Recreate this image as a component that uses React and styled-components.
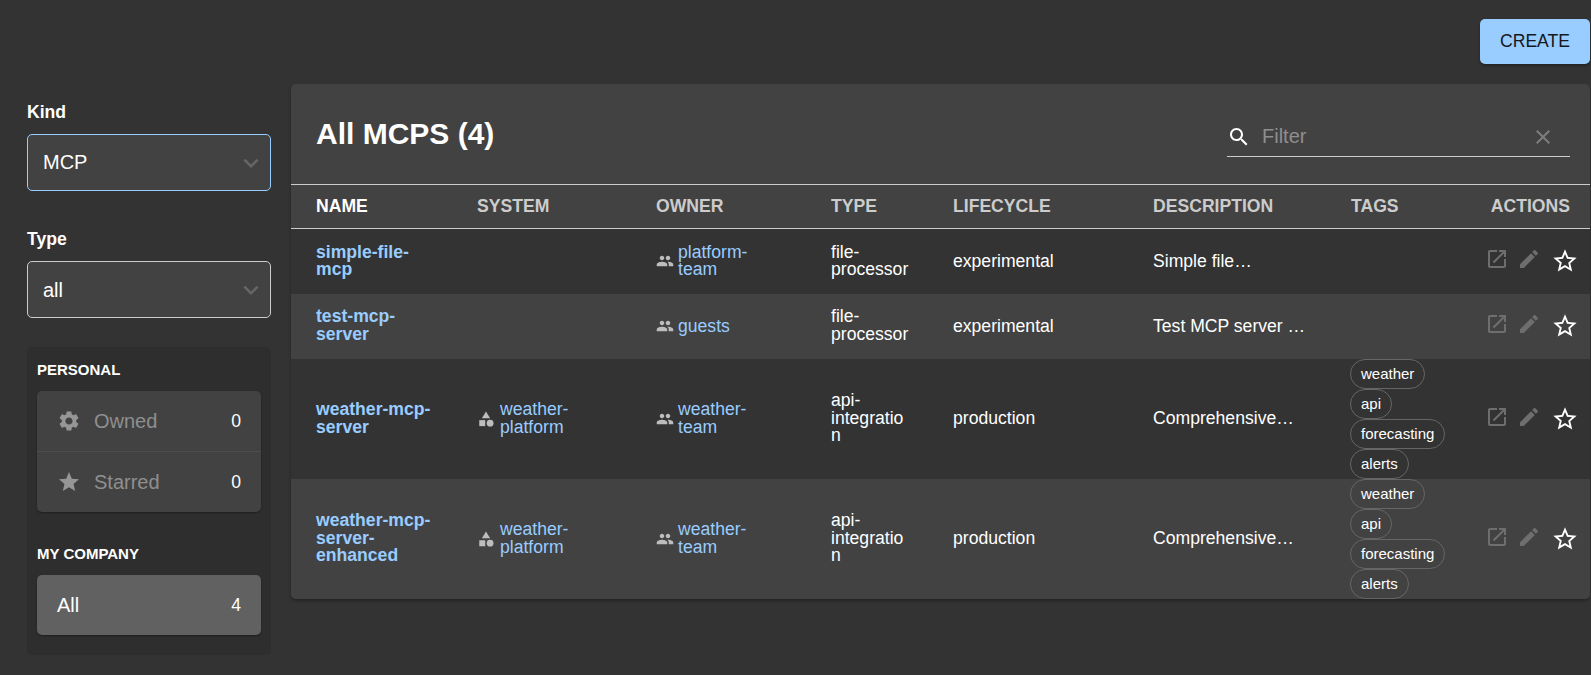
import React from "react";
import styled, { createGlobalStyle } from "styled-components";

const GlobalStyle = createGlobalStyle`
html, body {
  margin: 0;
  background: #333333;
  color: #ffffff;
  font-family: "Liberation Sans", Arial, sans-serif;
  overflow: hidden;
}
`;

const Page = styled.div`
  box-sizing: border-box;
  height: 675px;
  padding: 19px 1px 0 27px;
`;

const TopBar = styled.div`
  display: flex;
  justify-content: flex-end;
  margin-bottom: 20px;
`;

const CreateButton = styled.button`
  width: 110px;
  height: 45px;
  border: 0;
  border-radius: 5px;
  background: #99ccff;
  color: #14181f;
  font: 17.6px "Liberation Sans", Arial, sans-serif;
  box-shadow: 0 2px 3px rgba(0, 0, 0, 0.3);
`;

const Content = styled.div`
  display: grid;
  grid-template-columns: 244px 1fr;
  gap: 20px;
  align-items: start;
`;

const Sidebar = styled.aside`
  padding-top: 18px;
`;

const FieldLabel = styled.div`
  font-size: 17.6px;
  line-height: 20px;
  font-weight: 700;
  margin-bottom: 12px;
`;

const FieldGroup = styled.div`
  margin-bottom: ${(p) => p.$gap}px;
`;

const Select = styled.div`
  box-sizing: border-box;
  display: flex;
  align-items: center;
  justify-content: space-between;
  height: 57px;
  padding: 0 4px 0 15px;
  background: #424242;
  border: 1px solid ${(p) => (p.$focused ? "#99ccff" : "#cccccc")};
  border-radius: 5px;
  font-size: 20px;
`;

const SelectValue = styled.span`
  padding-top: ${(p) => (p.$lower ? "2px" : "0")};
`;

const FilterCard = styled.div`
  padding: 0 10px 20px;
  background: #2e2e2e;
  border-radius: 5px;
`;

const SectionTitle = styled.div`
  font-size: 15px;
  line-height: 15px;
  font-weight: 700;
  padding: ${(p) => (p.$first ? "15px 0 14px" : "34px 0 14px")};
`;

const MenuCard = styled.div`
  background: ${(p) => (p.$active ? "#616161" : "#424242")};
  border-radius: 5px;
  box-shadow: 0 1px 2px rgba(0, 0, 0, 0.35);
`;

const MenuRow = styled.div`
  display: flex;
  align-items: center;
  gap: 13px;
  height: 60px;
  padding: 0 20px;
  font-size: 20px;
  color: ${(p) => (p.$muted ? "#8f8f8f" : "#ffffff")};
  & + & {
    border-top: 1px solid #4d4d4d;
  }
`;

const MenuCount = styled.span`
  margin-left: auto;
  font-size: 17.6px;
  color: #ffffff;
`;

const Panel = styled.section`
  background: #424242;
  border-radius: 5px;
  box-shadow: 0 2px 3px rgba(0, 0, 0, 0.3);
  overflow: hidden;
`;

const PanelHeader = styled.div`
  display: flex;
  align-items: center;
  justify-content: space-between;
  height: 100px;
  padding: 0 20px 0 25px;
`;

const Title = styled.h2`
  margin: 0;
  font-size: 30px;
  font-weight: 700;
`;

const FilterField = styled.div`
  display: flex;
  align-items: center;
  box-sizing: border-box;
  width: 343px;
  height: 40px;
  margin-top: 6px;
  padding-right: 15px;
  border-bottom: 1px solid #cccccc;
`;

const FilterInput = styled.input`
  flex: 1;
  min-width: 0;
  margin-left: 11px;
  padding: 0;
  border: 0;
  outline: 0;
  background: transparent;
  color: #ffffff;
  font: 20px "Liberation Sans", Arial, sans-serif;
  &::placeholder {
    color: #8f8f8f;
    opacity: 1;
  }
`;

const Table = styled.table`
  width: 100%;
  table-layout: fixed;
  border-collapse: collapse;
`;

const HeadRow = styled.tr`
  height: 44px;
  border-top: 1px solid #cccccc;
  border-bottom: 1px solid #cccccc;
`;

const HeadCell = styled.th`
  padding: ${(p) => (p.$first ? "0 16px 0 25px" : p.$right ? "0 20px 0 0" : "0 16px")};
  text-align: ${(p) => (p.$right ? "right" : "left")};
  font-size: 17.6px;
  font-weight: 700;
  color: ${(p) => (p.$active ? "#ffffff" : "#cccccc")};
  text-transform: uppercase;
`;

const BodyRow = styled.tr`
  height: 65px;
  background: ${(p) => (p.$odd ? "#333333" : "#424242")};
`;

const Cell = styled.td`
  padding: ${(p) => (p.$first ? "0 10px 0 25px" : p.$flush ? "0" : "0 16px")};
  font-size: 17.6px;
  line-height: 17.6px;
  white-space: pre-line;
  vertical-align: middle;
`;

const NameLink = styled.a`
  color: #99ccff;
  font-weight: 700;
`;

const EntityLink = styled.div`
  display: flex;
  align-items: center;
  gap: ${(p) => p.$gap}px;
  color: #99ccff;
`;

// single line values in the short rows sit a pixel lower
const CellText = styled.span`
  display: block;
  padding-top: ${(p) => (p.$lower ? "1px" : "0")};
`;

const TagList = styled.div`
  display: flex;
  flex-direction: column;
  align-items: flex-start;
  margin-left: 15px;
`;

const Tag = styled.span`
  box-sizing: border-box;
  height: 30px;
  padding: 0 10px;
  border: 1px solid #666666;
  border-radius: 15px;
  font-size: 15px;
  line-height: 28px;
`;

const Actions = styled.div`
  display: flex;
  align-items: flex-start;
  justify-content: flex-end;
  gap: 8px;
  padding-right: 11px;
`;

const StarButton = styled.span`
  display: flex;
  margin-left: 2px;
`;

const Icon = ({ size = 24, color = "currentColor", children }) => (
  <svg width={size} height={size} viewBox="0 0 24 24" fill={color} style={{ flex: "none" }}>
    {children}
  </svg>
);

const Chevron = () => (
  <Icon size={30} color="#666666">
    <path d="M16.59 8.59L12 13.17 7.41 8.59 6 10l6 6 6-6z" />
  </Icon>
);

const GearIcon = () => (
  <Icon color="#969696">
    <path d="M19.14 12.94c.04-.3.06-.61.06-.94 0-.32-.02-.64-.07-.94l2.03-1.58c.18-.14.23-.41.12-.61l-1.92-3.32c-.12-.22-.37-.29-.59-.22l-2.39.96c-.5-.38-1.03-.7-1.62-.94l-.36-2.54c-.04-.24-.24-.41-.48-.41h-3.84c-.24 0-.43.17-.47.41l-.36 2.54c-.59.24-1.13.57-1.62.94l-2.39-.96c-.22-.08-.47 0-.59.22L2.74 8.87c-.12.21-.08.47.12.61l2.03 1.58c-.05.3-.09.63-.09.94s.02.64.07.94l-2.03 1.58c-.18.14-.23.41-.12.61l1.92 3.32c.12.22.37.29.59.22l2.39-.96c.5.38 1.03.7 1.62.94l.36 2.54c.05.24.24.41.48.41h3.84c.24 0 .44-.17.47-.41l.36-2.54c.59-.24 1.13-.56 1.62-.94l2.39.96c.22.08.47 0 .59-.22l1.92-3.32c.12-.22.07-.47-.12-.61l-2.01-1.58zM12 15.6c-1.98 0-3.6-1.62-3.6-3.6s1.62-3.6 3.6-3.6 3.6 1.62 3.6 3.6-1.62 3.6-3.6 3.6z" />
  </Icon>
);

const StarIcon = () => (
  <Icon color="#969696">
    <path d="M12 17.27L18.18 21l-1.64-7.03L22 9.24l-7.19-.61L12 2 9.19 8.63 2 9.24l5.46 4.73L5.82 21z" />
  </Icon>
);

const SearchIcon = () => (
  <Icon color="#ffffff">
    <path d="M15.5 14h-.79l-.28-.27C15.41 12.59 16 11.11 16 9.5 16 5.91 13.09 3 9.5 3S3 5.91 3 9.5 5.91 16 9.5 16c1.61 0 3.09-.59 4.23-1.57l.27.28v.79l5 4.99L20.49 19l-4.99-5zm-6 0C7.01 14 5 11.99 5 9.5S7.01 5 9.5 5 14 7.01 14 9.5 11.99 14 9.5 14z" />
  </Icon>
);

const ClearIcon = () => (
  <Icon color="#7d7d7d">
    <path d="M19 6.41L17.59 5 12 10.59 6.41 5 5 6.41 10.59 12 5 17.59 6.41 19 12 13.41 17.59 19 19 17.59 13.41 12z" />
  </Icon>
);

const PeopleIcon = () => (
  <Icon size={18} color="#bdbdbd">
    <path d="M16 11c1.66 0 2.99-1.34 2.99-3S17.66 5 16 5c-1.66 0-3 1.34-3 3s1.34 3 3 3zm-8 0c1.66 0 2.99-1.34 2.99-3S9.66 5 8 5C6.34 5 5 6.34 5 8s1.34 3 3 3zm0 2c-2.33 0-7 1.17-7 3.5V19h14v-2.5c0-2.33-4.67-3.5-7-3.5zm8 0c-.29 0-.62.02-.97.05 1.16.84 1.97 1.97 1.97 3.45V19h6v-2.5c0-2.33-4.67-3.5-7-3.5z" />
  </Icon>
);

const CategoryIcon = () => (
  <Icon size={18} color="#bdbdbd">
    <path d="M12 2l-5.5 9h11z" />
    <circle cx="17.5" cy="17.5" r="4.5" />
    <path d="M3 13.5h8v8H3z" />
  </Icon>
);

const OpenIcon = () => (
  <Icon color="#6e6e6e">
    <path d="M19 19H5V5h7V3H5c-1.11 0-2 .9-2 2v14c0 1.1.89 2 2 2h14c1.1 0 2-.9 2-2v-7h-2v7zM14 3v2h3.59l-9.83 9.83 1.41 1.41L19 6.41V10h2V3h-7z" />
  </Icon>
);

const EditIcon = () => (
  <Icon color="#6e6e6e">
    <path d="M3 17.25V21h3.75L17.81 9.94l-3.75-3.75L3 17.25zM20.71 7.04c.39-.39.39-1.02 0-1.41l-2.34-2.34a.9959.9959 0 0 0-1.41 0l-1.83 1.83 3.75 3.75 1.83-1.83z" />
  </Icon>
);

const StarBorderIcon = () => (
  <Icon size={28} color="#ffffff">
    <path d="M22 9.24l-7.19-.62L12 2 9.19 8.63 2 9.24l5.46 4.73L5.82 21 12 17.27 18.18 21l-1.63-7.03L22 9.24zM12 15.4l-3.76 2.27 1-4.28-3.32-2.88 4.38-.38L12 6.1l1.71 4.04 4.38.38-3.32 2.88 1 4.28L12 15.4z" />
  </Icon>
);

const columns = [
  { label: "Name", width: 170, active: true, first: true },
  { label: "System", width: 179 },
  { label: "Owner", width: 175 },
  { label: "Type", width: 122 },
  { label: "Lifecycle", width: 200 },
  { label: "Description", width: 198 },
  { label: "Tags", width: 140 },
  { label: "Actions", width: 115, right: true },
];

const weatherTags = ["weather", "api", "forecasting", "alerts"];

const rows = [
  {
    name: "simple-file-\nmcp",
    owner: "platform-\nteam",
    type: "file-\nprocessor",
    lifecycle: "experimental",
    description: "Simple file…",
  },
  {
    name: "test-mcp-\nserver",
    owner: "guests",
    type: "file-\nprocessor",
    lifecycle: "experimental",
    description: "Test MCP server …",
  },
  {
    name: "weather-mcp-\nserver",
    system: "weather-\nplatform",
    owner: "weather-\nteam",
    type: "api-\nintegratio\nn",
    lifecycle: "production",
    description: "Comprehensive…",
    tags: weatherTags,
  },
  {
    name: "weather-mcp-\nserver-\nenhanced",
    system: "weather-\nplatform",
    owner: "weather-\nteam",
    type: "api-\nintegratio\nn",
    lifecycle: "production",
    description: "Comprehensive…",
    tags: weatherTags,
  },
];

function App() {
  return (
    <>
      <GlobalStyle />
      <Page>
        <TopBar>
          <CreateButton>CREATE</CreateButton>
        </TopBar>
        <Content>
          <Sidebar>
            <FieldGroup $gap={38}>
              <FieldLabel>Kind</FieldLabel>
              <Select $focused>
                <SelectValue>MCP</SelectValue>
                <Chevron />
              </Select>
            </FieldGroup>
            <FieldGroup $gap={29}>
              <FieldLabel>Type</FieldLabel>
              <Select>
                <SelectValue $lower>all</SelectValue>
                <Chevron />
              </Select>
            </FieldGroup>
            <FilterCard>
              <SectionTitle $first>PERSONAL</SectionTitle>
              <MenuCard>
                <MenuRow $muted>
                  <GearIcon />
                  Owned
                  <MenuCount>0</MenuCount>
                </MenuRow>
                <MenuRow $muted>
                  <StarIcon />
                  Starred
                  <MenuCount>0</MenuCount>
                </MenuRow>
              </MenuCard>
              <SectionTitle>MY COMPANY</SectionTitle>
              <MenuCard $active>
                <MenuRow>
                  All
                  <MenuCount>4</MenuCount>
                </MenuRow>
              </MenuCard>
            </FilterCard>
          </Sidebar>
          <Panel>
            <PanelHeader>
              <Title>All MCPS (4)</Title>
              <FilterField>
                <SearchIcon />
                <FilterInput placeholder="Filter" readOnly />
                <ClearIcon />
              </FilterField>
            </PanelHeader>
            <Table>
              <colgroup>
                {columns.map((c) => (
                  <col key={c.label} width={c.width} />
                ))}
              </colgroup>
              <thead>
                <HeadRow>
                  {columns.map((c) => (
                    <HeadCell key={c.label} $first={c.first} $right={c.right} $active={c.active}>
                      {c.label}
                    </HeadCell>
                  ))}
                </HeadRow>
              </thead>
              <tbody>
                {rows.map((r, i) => (
                  <BodyRow key={r.name} $odd={i % 2 === 0}>
                    <Cell $first>
                      <NameLink>{r.name}</NameLink>
                    </Cell>
                    <Cell>
                      {r.system && (
                        <EntityLink $gap={5}>
                          <CategoryIcon />
                          <CellText>{r.system}</CellText>
                        </EntityLink>
                      )}
                    </Cell>
                    <Cell>
                      <EntityLink $gap={4}>
                        <PeopleIcon />
                        <CellText $lower={!r.owner.includes("\n")}>{r.owner}</CellText>
                      </EntityLink>
                    </Cell>
                    <Cell>{r.type}</Cell>
                    <Cell>
                      <CellText $lower={!r.tags}>{r.lifecycle}</CellText>
                    </Cell>
                    <Cell>
                      <CellText $lower={!r.tags}>{r.description}</CellText>
                    </Cell>
                    <Cell $flush>
                      {r.tags && (
                        <TagList>
                          {r.tags.map((t) => (
                            <Tag key={t}>{t}</Tag>
                          ))}
                        </TagList>
                      )}
                    </Cell>
                    <Cell $flush>
                      <Actions>
                        <OpenIcon />
                        <EditIcon />
                        <StarButton>
                          <StarBorderIcon />
                        </StarButton>
                      </Actions>
                    </Cell>
                  </BodyRow>
                ))}
              </tbody>
            </Table>
          </Panel>
        </Content>
      </Page>
    </>
  );
}

export default App;
